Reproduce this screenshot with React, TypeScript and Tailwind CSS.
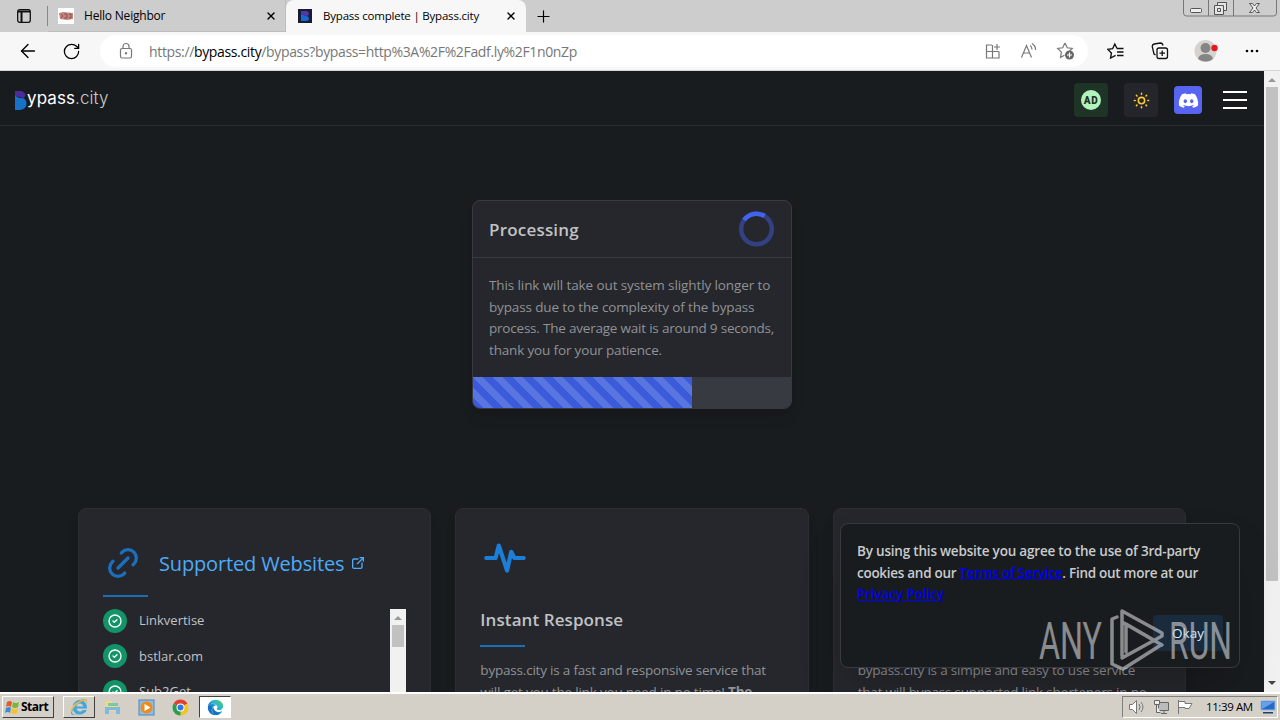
import { ArrowLeft, Plus, RotateCw, X } from 'lucide-react';
import { FaDiscord, FaEdge, FaInternetExplorer } from 'react-icons/fa';
import { TbActivityHeartbeat, TbCircleCheck, TbExternalLink, TbLink, TbSun } from 'react-icons/tb';

const websites = ['Linkvertise', 'bstlar.com', 'Sub2Get'];

function TabBar() {
  return (
    <div className="flex h-8 bg-[#cdcdcd] text-[12px] text-black">
      <div className="flex w-[48px] items-center pl-[17px]">
        <svg width="14" height="14" viewBox="0 0 14 14" fill="none" stroke="#111">
          <rect x="0.7" y="0.7" width="12.6" height="12.6" rx="2" strokeWidth="1.3" />
          <path d="M1 2.5h12M4.5 3v10" strokeWidth="2" />
        </svg>
        <div className="ml-4 h-5 w-px bg-[#888]" />
      </div>
      <div className="flex w-[238px] items-center border-b border-r border-[#bcbcbc] pl-[10px]">
        <div className="flex h-4 w-4 items-center justify-center bg-white">
          <svg width="14" height="8" viewBox="0 0 14 8">
            <path d="M0 1l4-1 10 1v6l-6 1-7-1z" fill="#c8837d" />
            <path d="M2 2l2 2-2 2M5 2h3v4H5M10 2h2v4h-2" fill="none" stroke="#7c5558" />
          </svg>
        </div>
        <span className="ml-[10px] w-[181px] whitespace-nowrap tracking-[-0.2px]">Hello Neighbor</span>
        <X size={12} strokeWidth={2.8} className="shrink-0" />
      </div>
      <div className="flex w-[240px] items-center rounded-t-lg bg-[#f7f7f7] pl-[12px]">
        <svg width="14" height="14" viewBox="0 0 14 14">
          <rect width="14" height="14" fill="#171b36" />
          <path d="M3 2h5q3 0 3 2.500t-3 2.500L3 5z" fill="#5636a5" />
          <path d="M3 5l5 2q3 0 3 2.500T8 12H3z" fill="#1769ce" />
        </svg>
        <span className="ml-[11px] w-[182px] shrink-0 whitespace-nowrap text-[11.5px] tracking-[-0.2px]">Bypass complete | Bypass.city</span>
        <X size={12} strokeWidth={2.8} className="shrink-0" />
      </div>
      <div className="flex items-center pl-[8px]">
        <Plus size={19} strokeWidth={1.5} />
      </div>
      <svg className="ml-auto mr-[3px]" width="94" height="18" viewBox="0 0 94 18" fill="none" stroke="#777">
        <path d="M0.500 0v13q0 3 3 3h87q3 0 3-3V0M25.500 0v16M50.500 0v16" />
        <rect x="7.500" y="8.500" width="11" height="4" rx="1" fill="#eee" stroke="#555" />
        <path d="M34.500 5V2.500h9v8H41M31.500 5.500h9v9h-9zM34.500 8.500h3v3h-3z" fill="#e5e5e5" stroke="#555" />
        <path d="M66.500 3.500h3l2 2.500 2-2.500h3l-3.500 4.500 3.500 4.500h-3l-2-2.500-2 2.500h-3l3.500-4.500z" fill="#eee" stroke="#555" />
      </svg>
    </div>
  );
}

function AddressBar() {
  return (
    <div className="flex h-[39px] items-center border-b border-[#d5d5d5] bg-[#f7f7f7] text-black">
      <ArrowLeft size={22} strokeWidth={1.5} className="ml-[17px]" />
      <RotateCw size={19} strokeWidth={1.6} className="ml-[23px]" />
      <div className="ml-[19px] flex h-[32px] w-[988px] items-center rounded-full bg-white pl-[18px] text-[#777]">
        <svg width="16" height="18" viewBox="0 0 16 18" fill="none" stroke="#777" strokeWidth="1.200">
          <rect x="2.500" y="6.500" width="11" height="9.500" rx="1.500" />
          <path d="M5 6V4.500a3 3 0 0 1 6 0V6" />
          <circle cx="8" cy="11.300" r="0.600" fill="#777" />
        </svg>
        <span className="ml-[15px] w-[430px] whitespace-nowrap text-[14px] tracking-[-0.35px]">
          https://<span className="text-black">bypass.city</span>/bypass?bypass=http%3A%2F%2Fadf.ly%2F1n0nZp
        </span>
        <svg className="ml-[405px]" width="18" height="18" viewBox="0 0 18 18" fill="none" stroke="#777" strokeWidth="1.200">
          <path d="M8 3H2.500v13H15V9.500M2.500 9.500H15M8.500 3v13M13 2v6M10 5h6" />
        </svg>
        <svg className="ml-[18px]" width="18" height="18" viewBox="0 0 18 18" fill="none" stroke="#777" strokeWidth="1.200">
          <path d="M1.500 15.500l5-12 5 12M3.300 11h6.500M10 3.500q2 1 2 4M12 1.500q4 2.500 3.500 6.500" />
        </svg>
        <svg className="ml-[18px]" width="20" height="20" viewBox="0 0 20 20" fill="none" stroke="#777" strokeWidth="1.200">
          <path d="M9 2l2.300 4.800 5 .700-3.600 3.400M9 2L6.700 6.800l-5 .700 3.700 3.700-.9 5.200L8.500 14.300" />
          <circle cx="13.500" cy="14" r="4.500" fill="#666" stroke="none" />
          <path d="M13.500 11.500v5M11 14h5" stroke="#fff" />
        </svg>
      </div>
      <svg className="ml-[19px]" width="18" height="18" viewBox="0 0 18 18" fill="none" stroke="#111" strokeWidth="1.400">
        <path d="M10 6.500L7.800 2 5.600 6.700l-4.800.700 3.600 3.500L3.600 16l5-2.700M10 6.500h6.500M10 10h6.500M10 13.500h6.500" />
      </svg>
      <svg className="ml-[26px]" width="18" height="18" viewBox="0 0 18 18" fill="none" stroke="#111" strokeWidth="1.300">
        <rect x="6" y="6" width="10.500" height="10.500" rx="2" />
        <path d="M11.200 8.500v5.500M8.500 11.200H14M4.500 13L3 12 1.200 4.500q0-2 2-2.500L9.500 1q2 0 2.500 2.500" />
      </svg>
      <svg className="ml-[25px]" width="24" height="24" viewBox="0 0 24 24">
        <circle cx="11.500" cy="12" r="11" fill="#d5d2d0" />
        <circle cx="11.500" cy="9" r="5" fill="#858585" />
        <path d="M4 20q1-5 7.500-5t7.500 5q-7 5-15 0z" fill="#858585" />
        <circle cx="20.500" cy="9" r="3.200" fill="#e01b24" />
      </svg>
      <svg className="ml-[27px]" width="14" height="4" viewBox="0 0 14 4">
        <circle cx="2" cy="2" r="1.300" />
        <circle cx="7" cy="2" r="1.300" />
        <circle cx="12" cy="2" r="1.300" />
      </svg>
    </div>
  );
}

function Header() {
  return (
    <header className="flex h-[55px] shrink-0 items-center border-b border-[#2c2e33] pl-[14px] pr-[17px] pt-[4px]">
      <svg width="13" height="20" viewBox="0 0 13 20">
        <path d="M1 1h5q5 0 5.500 4.500L10 8 1 6z" fill="#4c2c9b" />
        <path d="M1 5.500q3 2.500 6 2.500 5.500 0 5.500 5.500Q12.500 20 5 20H1z" fill="#1572c8" />
      </svg>
      <span className="-mt-[3px] whitespace-nowrap font-['Inter',sans-serif] text-[17px] tracking-[0.08px] text-white">
        ypass<span className="font-light text-[#ccc]">.city</span>
      </span>
      <div className="ml-auto flex items-center">
        <div className="flex h-[34px] w-[34px] items-center justify-center rounded bg-[#1e3427]">
          <div className="flex h-5 w-5 items-center justify-center rounded-full bg-[#b2f2bb] font-['Roboto',sans-serif] text-[10px] font-black tracking-[0.5px] text-[#1e3427]">
            AD
          </div>
        </div>
        <div className="ml-4 flex h-[34px] w-[34px] items-center justify-center rounded bg-[#25262b]">
          <TbSun size={19} color="#fcc931" />
        </div>
        <div className="ml-4 flex h-7 w-7 items-center justify-center rounded bg-[#5865f2]">
          <FaDiscord size={21} color="#fff" />
        </div>
        <div className="ml-[21px] flex w-6 flex-col gap-[6px]">
          <div className="h-[2px] bg-white" />
          <div className="h-[2px] bg-white" />
          <div className="h-[2px] bg-white" />
        </div>
      </div>
    </header>
  );
}

function ProcessingCard() {
  return (
    <section className="mx-auto mt-[74px] h-[209px] w-[320px] shrink-0 overflow-hidden rounded-lg border border-[#373a40] bg-[#25272c] shadow-lg">
      <div className="flex h-[57px] items-center justify-between border-b border-[#373a40] px-4">
        <h2 className="mt-[2px] text-[17px] font-semibold tracking-[0.2px] text-[#c1c2c5]">Processing</h2>
        <svg width="37" height="37" viewBox="0 0 37 37" fill="none" strokeWidth="4.500">
          <circle cx="18.500" cy="18" r="15.300" stroke="#334081" />
          <path d="M6 9A15.300 15.300 0 0 1 26.500 5" stroke="#4263eb" />
        </svg>
      </div>
      <p className="h-[119px] whitespace-nowrap px-4 pt-[17px] text-[13.5px] leading-[21.7px] text-[#909296]">
        <span className="block tracking-[-0.1px]">This link will take out system slightly longer to</span>
        <span className="block tracking-[-0.14px]">bypass due to the complexity of the bypass</span>
        <span className="block tracking-[-0.21px]">process. The average wait is around 9 seconds,</span>
        <span className="block tracking-[-0.16px]">thank you for your patience.</span>
      </p>
      <div className="h-[31px] bg-[#373a40]">
        <div className="h-full w-[219px] bg-[#3b5bdb] bg-[linear-gradient(45deg,#5875e0_25%,transparent_25%,transparent_50%,#5875e0_50%,#5875e0_75%,transparent_75%,transparent)] bg-[length:20px_20px]" />
      </div>
    </section>
  );
}

function Underline() {
  return <div className="h-[2px] w-[45px] bg-[#1c6fb5]" />;
}

function WebsitesCard() {
  return (
    <div className="h-[300px] rounded-lg border border-[#2c2e33] bg-[#25272c] px-6 pt-[34px] shadow-lg">
      <div className="flex h-10 items-center">
        <TbLink size={40} color="#1c6fbd" />
        <span className="ml-4 mt-[2px] whitespace-nowrap text-[20px] tracking-[-0.15px] text-[#4dabf7]">Supported Websites</span>
        <TbExternalLink size={16} color="#4dabf7" className="ml-[6px]" />
      </div>
      <div className="pt-3">
        <Underline />
      </div>
      <div className="mt-3 flex">
        <ul className="flex grow flex-col gap-[11.300px]">
          {websites.map(site => (
            <li key={site} className="flex h-6 items-center gap-3 text-[13px] text-[#c1c2c5]">
              <span className="flex h-6 w-6 items-center justify-center rounded-full bg-[#129368]">
                <TbCircleCheck size={16} color="#fff" />
              </span>
              {site}
            </li>
          ))}
        </ul>
        <div className="h-[180px] w-4 bg-[#f1f1f1]">
          <svg width="16" height="16" viewBox="0 0 16 16">
            <path d="M4 11l4-4 4 4z" fill="#999" />
          </svg>
          <div className="mx-auto h-[22px] w-3 bg-[#c1c1c1]" />
        </div>
      </div>
    </div>
  );
}

function FeatureCard({ title, children }: { title: string; children: React.ReactNode }) {
  return (
    <div className="h-[300px] rounded-lg border border-[#2c2e33] bg-[#25272c] px-6 pt-6 shadow-lg">
      <TbActivityHeartbeat size={50} color="#1c7ed6" />
      <h3 className="mt-[23px] h-7 whitespace-nowrap text-[17px] font-semibold leading-7 tracking-[0.08px] text-[#c1c2c5]">{title}</h3>
      <div className="pt-[11px]">
        <Underline />
      </div>
      <p className="mt-[13px] whitespace-nowrap text-[13.5px] leading-[21.7px] tracking-[-0.2px] text-[#909296]">{children}</p>
    </div>
  );
}

function CookieDialog() {
  return (
    <div className="absolute left-[840px] top-[452px] flex h-[145px] w-[400px] flex-col rounded-lg border border-[#373a40] bg-[#191c1f] px-4 pt-[17px] shadow-2xl">
      <p className="whitespace-nowrap text-[13.5px] font-semibold leading-[21.7px] text-[#c8cacc]">
        <span className="block tracking-[-0.2px]">By using this website you agree to the use of 3rd-party</span>
        <span className="block tracking-[-0.28px]">
          cookies and our <a className="text-[#0000ee] underline">Terms of Service</a>. Find out more at our
        </span>
        <a className="block tracking-[-0.1px] text-[#0000ee] underline">Privacy Policy</a>
      </p>
      <button className="ml-auto mt-[9px] h-9 w-[70px] shrink-0 rounded bg-[#1a2b3e] text-[13.5px] text-[#d0ebff]">Okay</button>
    </div>
  );
}

function Watermark() {
  return (
    <svg className="absolute left-[1030px] top-[529px]" width="210" height="85" viewBox="0 0 210 85">
      <g fill="#c5c7c9" opacity="0.65" fontFamily="Roboto" fontSize="52">
        <text x="9" y="59" textLength="63" lengthAdjust="spacingAndGlyphs">ANY</text>
        <text x="139" y="59" textLength="63" lengthAdjust="spacingAndGlyphs">RUN</text>
        <g fill="none" stroke="#c5c7c9" strokeWidth="3.500" strokeLinejoin="round" strokeLinecap="round">
          <path d="M87 17l-5 2v45l11 5 38-24" />
          <path d="M92 56V11l40 22v3M92 58l40-22M96 24v28M96 24l26 15M132 45L92 22" />
        </g>
      </g>
    </svg>
  );
}

function PageScrollbar() {
  return (
    <div className="flex w-4 shrink-0 flex-col items-center bg-[#f1f1f1]">
      <svg width="16" height="16" viewBox="0 0 16 16">
        <path d="M4 11l4-4 4 4z" fill="#999" />
      </svg>
      <div className="h-[494px] w-3 bg-[#c1c1c1]" />
      <svg className="mt-auto" width="16" height="18" viewBox="0 0 16 18">
        <path d="M4 7l4 4 4-4z" fill="#444" />
      </svg>
    </div>
  );
}

function Taskbar() {
  return (
    <div className="flex h-7 items-center border-t-2 border-white bg-[#d4d0c8] pl-[2px] pr-[2px] text-black">
      <div className="flex h-[22px] w-[52px] items-center border border-b-[#404040] border-l-white border-r-[#404040] border-t-white pl-[2px]">
        <svg width="15" height="15" viewBox="0 0 15 15">
          <path d="M2 2q3-2 5 0L6 7q-3-2-5 0z" fill="#e45b2b" />
          <path d="M8 2q3 2 6 0l-1 5q-3 2-6 0z" fill="#7bb53d" />
          <path d="M1 8q3-2 5 0l-1 5q-2-2-5 0z" fill="#3c8ad8" />
          <path d="M7 8q3 2 6 0l-1 5q-3 2-6 0z" fill="#f6c22e" />
        </svg>
        <span className="ml-px text-[12px] font-bold tracking-[-0.5px]">Start</span>
      </div>
      <div className="ml-[9px] flex h-[22px] w-8 items-center justify-center border border-b-[#404040] border-l-white border-r-[#404040] border-t-white">
        <svg width="18" height="18" viewBox="0 0 18 18">
          <FaInternetExplorer size={16} x="1" y="1" color="#43a6df" />
          <path d="M1 14Q3 7 11 3q6-3 5 1" fill="none" stroke="#e9b844" strokeWidth="1.500" />
        </svg>
      </div>
      <svg className="ml-[9px]" width="17" height="17" viewBox="0 0 17 17">
        <path d="M2 2h5l1 2h6v8H2z" fill="#f2da83" />
        <path d="M4 4h10v3H4z" fill="#7ec6a3" />
        <path d="M1 8h15v7h-4v-4H5v4H1z" fill="#7eb9df" />
      </svg>
      <svg className="ml-[17px]" width="17" height="17" viewBox="0 0 17 17">
        <rect x="1" y="1" width="15" height="15" fill="#8ebde4" stroke="#4b87c2" />
        <circle cx="8.500" cy="8.500" r="6" fill="#f28a17" />
        <path d="M6.500 5l6 3.500-6 3.500z" fill="#fff" />
      </svg>
      <svg className="ml-[17px]" width="17" height="17" viewBox="0 0 17 17">
        <path d="M8.500 8.500L1.600 4.500a8 8 0 0 1 13.800 0z" fill="#e2402f" />
        <path d="M8.500 8.500l6.900-4a8 8 0 0 1-6.900 12z" fill="#f9c31c" />
        <path d="M8.500 8.500v8a8 8 0 0 1-6.900-12z" fill="#2d9d4c" />
        <circle cx="8.500" cy="8.500" r="4" fill="#fff" />
        <circle cx="8.500" cy="8.500" r="3" fill="#2f78e5" />
      </svg>
      <div className="ml-[10px] flex h-[22px] w-8 items-center justify-center border border-b-white border-l-[#404040] border-r-white border-t-[#404040] bg-white">
        <svg width="17" height="17" viewBox="0 0 17 17">
          <defs>
            <linearGradient id="edge" x1="0" y1="1" x2="1" y2="0">
              <stop offset="0.350" stopColor="#1471c4" />
              <stop offset="0.600" stopColor="#27b7d3" />
              <stop offset="1" stopColor="#62cc55" />
            </linearGradient>
          </defs>
          <FaEdge size={16} x="0.500" y="0.500" fill="url(#edge)" />
        </svg>
      </div>
      <div className="ml-auto flex h-[22px] w-[156px] items-center border border-b-white border-l-[#808080] border-r-white border-t-[#808080] pl-[5px]">
        <svg width="18" height="16" viewBox="0 0 18 16" fill="#fff" stroke="#777">
          <path d="M1.500 5.500h3l4-4v13l-4-4h-3z" />
          <path d="M11 5q2 3 0 6M13 3q4 5 0 10" fill="none" />
        </svg>
        <svg className="ml-[7px]" width="17" height="16" viewBox="0 0 17 16" fill="#eee" stroke="#666">
          <path d="M5.500 3.500h10v8h-10zM8 14.500h6M11 12v2" fill="#bbb" />
          <path d="M1.500 1.500h5v4h-5zM3.500 5.500v8h4" />
        </svg>
        <svg className="ml-[7px]" width="17" height="16" viewBox="0 0 17 16" fill="#fff" stroke="#777">
          <path d="M1.500 1v14M2 2.500h6v2h7l-3 5H8v-1H2" />
        </svg>
        <span className="ml-[12px] whitespace-nowrap text-[11.5px] tracking-[-0.4px]">11:39 AM</span>
        <svg className="ml-auto mr-[1px]" width="16" height="14" viewBox="0 0 16 14">
          <path d="M1 1h14v9H1z" fill="#2868c7" stroke="#8fb9e8" />
          <path d="M2 2h12L2 9z" fill="#65a2e5" />
          <path d="M3 12h10v1.500H3z" fill="#223f69" />
        </svg>
      </div>
    </div>
  );
}

export default function App() {
  return (
    <div className="flex h-[720px] w-[1280px] flex-col overflow-hidden bg-[#191c1f] font-['Open_Sans','Noto_Sans',sans-serif]">
      <TabBar />
      <AddressBar />
      <div className="relative flex h-[621px] overflow-hidden">
        <main className="flex w-[1264px] flex-col">
          <Header />
          <ProcessingCard />
          <div className="mx-auto mt-[99px] grid w-[1108px] grid-cols-3 gap-6">
            <WebsitesCard />
            <FeatureCard title="Instant Response">
              bypass.city is a fast and responsive service that
              <br />
              will get you the link you need in no time! <b>The</b>
            </FeatureCard>
            <FeatureCard title="Easy to use">
              bypass.city is a simple and easy to use service
              <br />
              that will bypass supported link shorteners in no
            </FeatureCard>
          </div>
        </main>
        <PageScrollbar />
        <CookieDialog />
        <Watermark />
      </div>
      <Taskbar />
    </div>
  );
}
